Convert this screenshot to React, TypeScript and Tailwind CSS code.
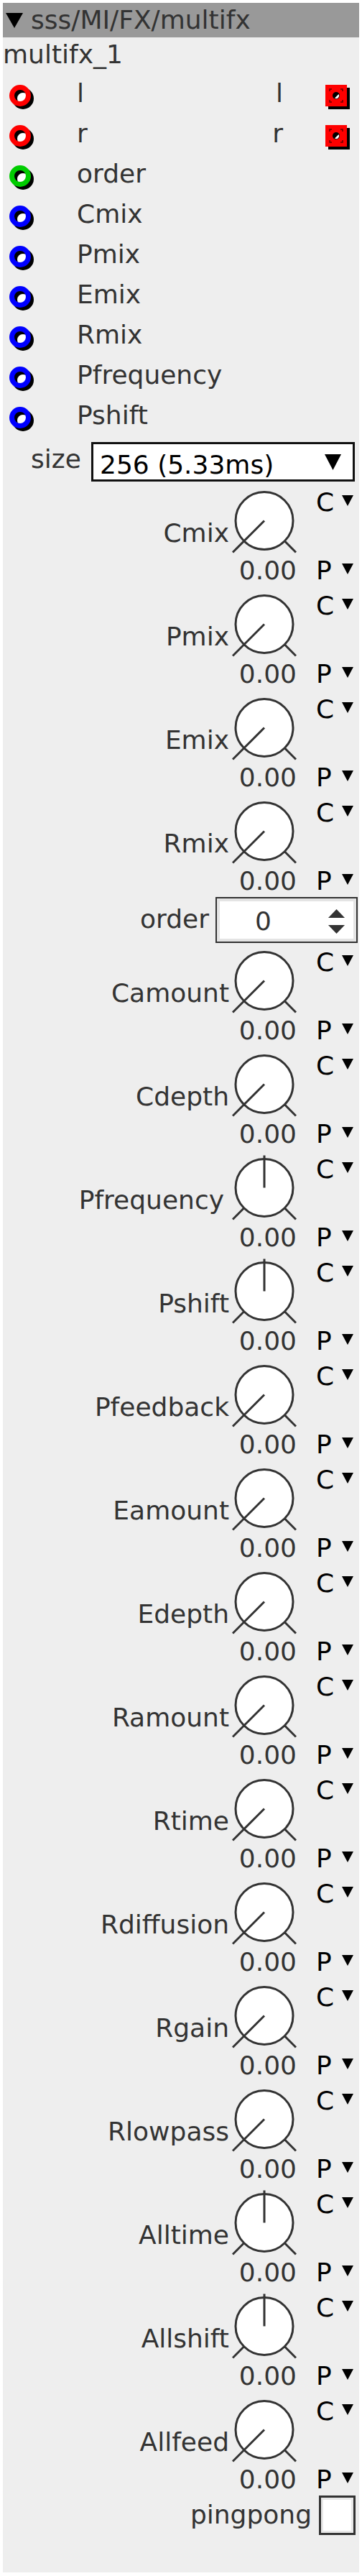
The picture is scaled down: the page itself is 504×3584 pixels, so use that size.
import React from "react";

// Inlet jack: coloured ring with a hard black drop shadow.
function Inlet({ color }: { color: string }) {
  return (
    <svg width="40" height="40" viewBox="0 0 40 40" className="ml-[4px] shrink-0">
      <circle cx="20" cy="20" r="8" fill="#ffffff" />
      <circle cx="24" cy="24" r="11.5" fill="none" stroke="#000" strokeWidth="7" />
      <circle cx="20" cy="20" r="11.5" fill="none" stroke={color} strokeWidth="7" />
    </svg>
  );
}

function Outlet() {
  return (
    <svg width="40" height="40" viewBox="0 0 40 40" className="ml-[54px] mr-[12px] shrink-0">
      <rect x="9" y="9" width="30" height="30" fill="#000" />
      <rect x="5" y="5" width="30" height="30" fill="#ff0000" />
      <g stroke="#600" strokeWidth="1.5" fill="none">
        <path d="M11 14 V11 H14" />
        <path d="M26 11 H29 V14" />
        <path d="M29 26 V29 H26" />
        <path d="M14 29 H11 V26" />
      </g>
      <circle cx="20" cy="20" r="5" fill="#000" />
      <path d="M18 23.5 L23.5 18 A4 4 0 0 1 18 23.5 Z" fill="#fff" />
    </svg>
  );
}

function Tri({ w, h, className }: { w: number; h: number; className?: string }) {
  return (
    <svg width={w} height={h} viewBox={`0 0 ${w} ${h}`} className={className}>
      <polygon points={`0,0 ${w},0 ${w / 2},${h}`} fill="#000" />
    </svg>
  );
}

function Dial({ bipolar }: { bipolar?: boolean }) {
  return (
    <svg width="90" height="101" viewBox="0 0 90 101" className="shrink-0">
      <g stroke="#333" strokeWidth="3" fill="none">
        <circle cx="45" cy="52.5" r="40" fill="#fff" />
        <line x1="73.3" y1="80.8" x2="89" y2="96.5" />
        {bipolar ? (
          <>
            <line x1="16.7" y1="80.8" x2="1" y2="96.5" />
            <line x1="45" y1="52.5" x2="45" y2="7.5" />
          </>
        ) : (
          <line x1="45" y1="52.5" x2="1" y2="96.5" />
        )}
      </g>
    </svg>
  );
}

function Mode({ letter }: { letter: string }) {
  return (
    <div className="flex leading-[42px]">
      <span className="w-[36px]">{letter}</span>
      <Tri w={16} h={15} className="mt-[11px]" />
    </div>
  );
}

function Knob({ label, bipolar, wide }: { label: string; bipolar?: boolean; wide?: boolean }) {
  return (
    <div className="flex h-[144px]">
      <div className={`flex-1 pt-[49px] text-right leading-[42px] ${wide ? "pr-[11px]" : "pr-[4px]"}`}>
        {label}
      </div>
      <div className="flex w-[90px] flex-col">
        <Dial bipolar={bipolar} />
        <div className="text-right leading-[42px]">0.00</div>
      </div>
      <div className="ml-[27px] flex w-[60px] flex-col justify-between pt-[6px] pb-[1px] text-black">
        <Mode letter="C" />
        <Mode letter="P" />
      </div>
    </div>
  );
}

const ports = [
  { name: "l", color: "#ff0000", outlet: true },
  { name: "r", color: "#ff0000", outlet: true },
  { name: "order", color: "#00cc00" },
  { name: "Cmix", color: "#0000ff" },
  { name: "Pmix", color: "#0000ff" },
  { name: "Emix", color: "#0000ff" },
  { name: "Rmix", color: "#0000ff" },
  { name: "Pfrequency", color: "#0000ff" },
  { name: "Pshift", color: "#0000ff" },
];

const mixKnobs = ["Cmix", "Pmix", "Emix", "Rmix"];

const fxKnobs: { label: string; bipolar?: boolean; wide?: boolean }[] = [
  { label: "Camount" },
  { label: "Cdepth" },
  { label: "Pfrequency", bipolar: true, wide: true },
  { label: "Pshift", bipolar: true },
  { label: "Pfeedback" },
  { label: "Eamount" },
  { label: "Edepth" },
  { label: "Ramount" },
  { label: "Rtime" },
  { label: "Rdiffusion" },
  { label: "Rgain" },
  { label: "Rlowpass" },
  { label: "Alltime", bipolar: true },
  { label: "Allshift", bipolar: true },
  { label: "Allfeed" },
];

export default function App() {
  return (
    <div className="bg-white p-[4px] font-['DejaVu_Sans',sans-serif] text-[36px] text-[#333]">
      <div className="w-[496px] bg-[#eeeeee] pb-[52px]">
        {/* title bar */}
        <div className="flex h-[48px] items-center bg-[#999999]">
          <Tri w={24} h={21} className="ml-[4px] shrink-0" />
          <span className="ml-[11px] leading-[48px]">sss/MI/FX/multifx</span>
        </div>
        <div className="h-[53px] leading-[48px]">multifx_1</div>

        {/* inlets / outlets */}
        {ports.map((p) => (
          <div key={p.name} className="flex h-[56px] items-center">
            <Inlet color={p.color} />
            <div className="ml-[59px] flex-1 pb-[6px] leading-[42px]">{p.name}</div>
            {p.outlet && (
              <>
                <div className="pb-[6px] leading-[42px]">{p.name}</div>
                <Outlet />
              </>
            )}
          </div>
        ))}

        {/* size combo */}
        <div className="flex h-[63px] items-start">
          <div className="ml-[39px] mt-[9px] w-[70px] leading-[42px]">size</div>
          <div className="ml-[14px] mt-[6px] flex h-[55px] w-[367px] items-start justify-between border-[3px] border-[#111] bg-white pr-[16px] text-black">
            <span className="pl-[9px] pt-[8px] leading-[42px]">256 (5.33ms)</span>
            <Tri w={23} h={22} className="mt-[14px]" />
          </div>
        </div>

        {mixKnobs.map((k) => (
          <Knob key={k} label={k} />
        ))}

        {/* order spinner */}
        <div className="flex h-[64px] items-start">
          <div className="flex-1 pr-[9px] pt-[10px] text-right leading-[42px]">order</div>
          <div className="mr-[2px] h-[64px] w-[198px] border-2 border-[#333]">
            <div className="flex h-full items-start border-[4px] border-[#e4e4e4] bg-white">
              <div className="w-[121px] pt-[7px] text-center leading-[42px]">0</div>
              <svg width="23" height="34" viewBox="0 0 23 34" className="ml-[30px] mt-[11px]">
                <polygon points="0,12 23,12 11.5,0" fill="#333" />
                <polygon points="0,22 23,22 11.5,34" fill="#333" />
              </svg>
            </div>
          </div>
        </div>

        {fxKnobs.map((k) => (
          <Knob key={k.label} label={k.label} bipolar={k.bipolar} wide={k.wide} />
        ))}

        {/* pingpong toggle */}
        <div className="flex h-[55px] items-start">
          <div className="flex-1 pr-[10px] pt-[6px] text-right leading-[42px]">pingpong</div>
          <div className="mr-[5px] h-[55px] w-[51px] border-[3px] border-[#333]">
            <div className="h-full border-[3px] border-[#e8e8e8] bg-white" />
          </div>
        </div>
      </div>
    </div>
  );
}
